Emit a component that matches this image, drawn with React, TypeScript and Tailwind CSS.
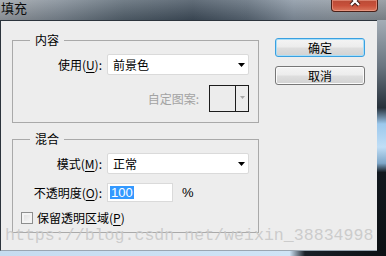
import type { ReactNode } from 'react';

const cjk = "font-['Noto_Sans_CJK_SC','Microsoft_YaHei',sans-serif]";

function Mn({ children }: { children: string }) {
  return <span className="underline decoration-1 underline-offset-[2px]">{children}</span>;
}

function DownArrow({ color = '#000000' }: { color?: string }) {
  return (
    <svg width="7" height="4" viewBox="0 0 7 4">
      <path d="M0 0h7L3.5 4z" fill={color} />
    </svg>
  );
}

function SelectBox({ value }: { value: string }) {
  return (
    <div className="flex h-[21px] w-[142px] items-center justify-between rounded-[2px] border border-[#dadada] bg-white pl-[5px] pr-[3px] text-[12px] leading-none text-black">
      <span>{value}</span>
      <DownArrow />
    </div>
  );
}

function Row({ label, children, className = '' }: { label: ReactNode; children: ReactNode; className?: string }) {
  return (
    <div className={`flex items-center ${className}`}>
      <div className="w-[89px] whitespace-nowrap text-right text-[12px] leading-none text-black">{label}</div>
      <div className="ml-[5px] flex items-center">{children}</div>
    </div>
  );
}

function Group({ title, children, className = '' }: { title: string; children: ReactNode; className?: string }) {
  return (
    <fieldset className={`m-0 w-[247px] min-w-0 border border-[#a9a9a9] p-0 ${className}`}>
      <legend className="ml-[17px] px-[5px] text-[12px] leading-[16px] text-black">{title}</legend>
      <div className="pr-[9px]">{children}</div>
    </fieldset>
  );
}

function WinButton({ label, primary = false }: { label: string; primary?: boolean }) {
  return (
    <div
      className={`flex h-[19px] w-[90px] items-center justify-center rounded-[3px] border bg-[linear-gradient(to_bottom,#f4f4f4_0%,#ececec_48%,#dedede_52%,#d2d2d2_100%)] text-[12px] leading-none text-black ${
        primary
          ? 'border-[#3aa0e0] shadow-[inset_0_0_0_1px_#a8def8]'
          : 'border-[#777777] shadow-[inset_0_0_0_1px_#fbfbfb]'
      }`}
    >
      {label}
    </div>
  );
}

export default function App() {
  return (
    <div className={`relative h-[256px] w-[386px] overflow-hidden bg-[#10161c] ${cjk}`}>
      {/* title bar */}
      <div className="flex h-[20px] items-start justify-between bg-[image:linear-gradient(to_bottom,rgba(255,255,255,0.18),rgba(0,0,0,0.12)),linear-gradient(to_right,#9aa0a6_0%,#7c8792_15%,#55636f_32%,#404e5c_50%,#5a6876_64%,#8592a0_76%,#8c959e_88%,#868d94_100%)]">
        <span className="pl-[1px] text-[13px] leading-[16px] text-[#0c0c0c]">填充</span>
        <div className="mr-[8px] flex h-[12px] w-[47px] items-start justify-center rounded-b-[4px] border border-t-0 border-[#4a2018] bg-[linear-gradient(to_bottom,#b84a36_0%,#c8503a_50%,#d9775e_100%)] shadow-[inset_0_0_0_1px_rgba(255,190,170,0.45)]">
          <svg width="12" height="7" viewBox="0 0 12 7">
            <path d="M2 -3L10 5M10 -3L2 5" stroke="#3a1a14" strokeWidth="4" />
            <path d="M2 -3L10 5M10 -3L2 5" stroke="#ffffff" strokeWidth="2.2" />
          </svg>
        </div>
      </div>

      <div className="flex">
        {/* client area */}
        <div className="flex h-[231px] w-[377px] border-b border-l border-t border-[#2c343c] border-b-[#9aa6b2] bg-[#ededed]">
          <div className="pl-[11px] pt-[11px]">
            <Group title="内容">
              <Row label={<>使用(<Mn>U</Mn>):</>} className="mt-[6px]">
                <SelectBox value="前景色" />
              </Row>
              <div className="mt-[10px] flex h-[27px] items-center justify-end">
                <span className="text-[12px] leading-none text-[#a3a3a3]">自定图案:</span>
                <div className="ml-[10px] flex h-[27px] w-[40px] border border-[#1c1c1c] bg-[#ececec]">
                  <div className="w-[26px] border-r border-[#1c1c1c]" />
                  <div className="flex flex-1 items-center justify-center pb-[2px]">
                    <svg width="5" height="3" viewBox="0 0 5 3">
                      <path d="M0 0h5L2.5 3z" fill="#a8a8a8" />
                    </svg>
                  </div>
                </div>
              </div>
              <div className="h-[10px]" />
            </Group>

            <Group title="混合" className="mt-[8px]">
              <Row label={<>模式(<Mn>M</Mn>):</>} className="mt-[6px]">
                <SelectBox value="正常" />
              </Row>
              <Row label={<>不透明度(<Mn>O</Mn>):</>} className="mt-[9px]">
                <div className="flex h-[19px] w-[66px] items-center border border-[#dadada] bg-white pl-[2px]">
                  <span className="bg-[#3399ff] px-[1px] font-['Liberation_Sans',sans-serif] text-[13px] leading-[13px] text-white">100</span>
                </div>
                <span className="ml-[9px] font-['Liberation_Sans',sans-serif] text-[13px] leading-none text-black">%</span>
              </Row>
              <div className="ml-[8px] mt-[10px] flex h-[12px] items-center">
                <div className="h-[12px] w-[12px] border border-[#8e8f8f] bg-[linear-gradient(135deg,#dcdcdc,#fbfbfb)] shadow-[inset_0_0_0_2px_#f4f4f4]" />
                <span className="ml-[4px] text-[12px] leading-none text-black">
                  保留透明区域(<Mn>P</Mn>)
                </span>
              </div>
              <div className="h-[8px]" />
            </Group>
          </div>

          <div className="flex flex-col pl-[16px] pt-[17px]">
            <WinButton label="确定" primary />
            <div className="mt-[9px]">
              <WinButton label="取消" />
            </div>
          </div>
        </div>

        {/* right window frame */}
        <div className="h-[231px] w-[9px] bg-[linear-gradient(to_bottom,#a4adb6_0%,#6a7580_20%,#26303a_38%,#9cc8ec_45%,#c0def6_55%,#7ea6c8_62%,#12181e_66%,#0c1014_100%)]" />
      </div>

      {/* bottom frame */}
      <div className="h-[5px] w-full bg-[linear-gradient(to_right,#c6dcf0_0%,#cfe4f6_75%,#1a2028_79%,#0c1014_100%)]" />

      {/* watermark */}
      <div className="pointer-events-none absolute left-[5px] top-[226px] whitespace-nowrap font-['Liberation_Mono',monospace] text-[16.6px] leading-[19px] text-[#c8c8c8]/90">
        https://blog.csdn.net/weixin_38834998
      </div>
    </div>
  );
}
